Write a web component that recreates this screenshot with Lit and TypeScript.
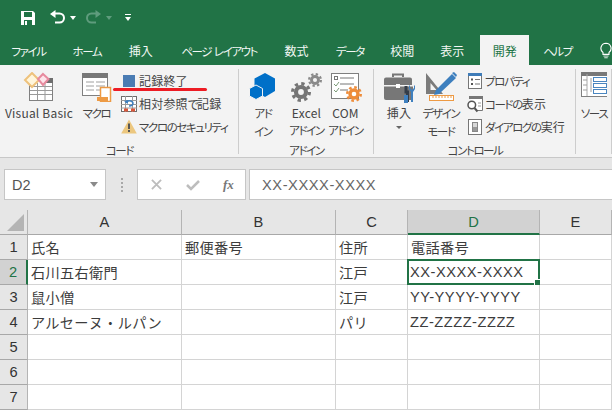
import { LitElement, html, css, svg } from "lit";
import { customElement } from "lit/decorators.js";

const gear = (cx: number, cy: number, r: number, color: string) => {
  const teeth = 8;
  const tr = r * 0.84;
  const c = 2 * Math.PI * tr;
  return svg`<circle cx=${cx} cy=${cy} r=${tr} fill="none" stroke=${color} stroke-width=${r * 0.32} stroke-dasharray="${c / teeth / 2} ${c / teeth / 2}" />
  <circle cx=${cx} cy=${cy} r=${r * 0.5} fill="none" stroke=${color} stroke-width=${r * 0.42} />`;
};

const kana = (s: string) =>
  s.split(/([\u3040-\u30ff]+)/).map((p, i) => (i % 2 ? html`<span class="ka">${p}</span>` : p));

const icons = {
  vb: html`<svg width="32" height="30" viewBox="0 0 32 30">
    <rect x="6.500" y="6.500" width="23" height="22" fill="#fff" stroke="#808080"/>
    <rect x="23" y="6" width="7" height="5" fill="#6e6e6e"/>
    <path d="M7 14.500h22M7 18.500h22M7 22.500h22M14.500 11v17M22 11v17" stroke="#9a9a9a"/>
    <path d="M9 1 16 8 9 15 2 8Z" fill="#fff6dc" stroke="#eec27c" stroke-width="2"/>
    <path d="M20 2 25.500 7 20 13 15 7Z" fill="#fde4ea" stroke="#e78a9e" stroke-width="2"/>
  </svg>`,
  macro: html`<svg width="32" height="30" viewBox="0 0 32 30">
    <rect x="1.500" y="1.500" width="25" height="22" fill="#fff" stroke="#808080"/>
    <rect x="1" y="1" width="26" height="5" fill="#787878"/>
    <path d="M5 10h8M15 10h9M5 14h8M15 14h9M5 18h8M15 18h9" stroke="#a0a0a0"/>
    <path d="M19.500 15.500h10v14h-10Z" fill="#fff" stroke="#ed9a44" stroke-width="1.500"/>
    <rect x="16" y="25" width="11" height="4" fill="#ed9a44"/>
  </svg>`,
  stop: html`<svg width="14" height="14" viewBox="0 0 14 14"><rect x="1" y="1" width="12" height="12" fill="#4a7cb3"/></svg>`,
  rel: html`<svg width="18" height="18" viewBox="0 0 18 18">
    <rect x="1.500" y="1.500" width="15" height="15" fill="#fff" stroke="#6e6e6e"/>
    <path d="M1 5.500h16M1 9.500h16M1 13h16M5.500 1v16M12.500 1v16" stroke="#9a9a9a"/>
    <rect x="4" y="13.500" width="4" height="3" fill="#d9573a"/><rect x="11" y="13.500" width="4" height="3" fill="#d9573a"/>
    <path d="M6 8c1-3 6-3 7 0 0 2-2 3-4 3" fill="none" stroke="#3f80bf" stroke-width="1.500"/>
    <path d="M4 6l4-1v4z" fill="#3f80bf"/>
  </svg>`,
  warn: html`<svg width="16" height="15" viewBox="0 0 16 15">
    <path d="M8 0.500 15.800 14.500H.2Z" fill="#ecc77f"/>
    <rect x="7" y="4.500" width="2" height="5.500" fill="#555"/><rect x="7" y="11" width="2" height="2" fill="#555"/>
  </svg>`,
  addin: html`<svg width="28" height="28" viewBox="0 0 28 28">
    <path d="M16 1 26 6.500V19L16 25 5.500 19V6.500Z" fill="#0070c8"/>
    <path d="M7 13 13.500 16.500V24L7 27.500.5 24V16.500Z" fill="#0070c8" stroke="#f3f3f3"/>
  </svg>`,
  gears: html`<svg width="34" height="32" viewBox="0 0 34 32">${gear(11, 20, 10, "#757575")}${gear(25, 8, 7, "#8a8a8a")}</svg>`,
  com: html`<svg width="32" height="30" viewBox="0 0 32 30">
    <rect x="1.500" y="1.500" width="27" height="25" fill="#fff" stroke="#7f7f7f"/>
    <path d="M10 6h14M10 12h14M10 18h8" stroke="#777"/>
    <rect x="4.500" y="4.500" width="3" height="3" fill="none" stroke="#777"/>
    <path d="M4 12l2 2 3-4M4 18l2 2 3-4" fill="none" stroke="#7b9a78"/>
    ${gear(24, 22, 8, "#ee8c3a")}
  </svg>`,
  box: html`<svg width="32" height="32" viewBox="0 0 32 32">
    <path d="M10 5V2.500h10V5" fill="none" stroke="#777" stroke-width="2"/>
    <path d="M1 7.500a2 2 0 0 1 2-2h24a2 2 0 0 1 2 2V13H1Z" fill="#777"/>
    <path d="M1 14.500h29V28H3a2 2 0 0 1-2-2Z" fill="#777"/>
    <rect x="13" y="12" width="4" height="4" fill="#fff"/>
    <path d="M23 14v6h1.500v10" stroke="#333c48" stroke-width="3" fill="none"/>
    <path d="M27 13v3l2 2 2-2v-3l1 1v3l-2 3v10h-2V20l-2-3v-3Z" fill="#3f80bf"/>
    <path d="M21 23h4v8h-4Z" fill="#3f80bf"/>
  </svg>`,
  design: html`<svg width="32" height="32" viewBox="0 0 32 32">
    <path d="M1 1V22H18Z M5.500 11 11.500 18H5.500Z" fill="#7b7b7b" fill-rule="evenodd"/>
    <path d="M27 2 31 6 14 22 9 23 11 18Z" fill="#3d7fbe"/>
    <path d="M27 1 29 0 32 3 31 5Z" fill="#3d7fbe"/>
    <rect x="4.500" y="23.500" width="24" height="5" fill="#fff" stroke="#ed9a44"/>
    <path d="M8 24v2M11 24v2M14 24v2M17 24v2M20 24v2M23 24v2M26 24v2" stroke="#ed9a44"/>
  </svg>`,
  prop: html`<svg width="16" height="18" viewBox="0 0 16 18">
    <rect x="1.500" y="1.500" width="13" height="15" fill="#fff" stroke="#777"/>
    <rect x="1" y="1" width="14" height="3" fill="#3f7cb8"/>
    <rect x="4" y="6.500" width="2" height="2" fill="#555"/><rect x="4" y="11" width="2" height="2" fill="#555"/>
    <path d="M8 7.500h5M8 12h5" stroke="#777"/>
  </svg>`,
  code: html`<svg width="18" height="18" viewBox="0 0 18 18">
    <path d="M3 1.500h13.500V15.500H10" fill="#fff" stroke="#777"/>
    <rect x="3" y="1" width="14" height="3" fill="#777"/>
    <path d="M12 8h3M12 11h3" stroke="#999"/>
    <circle cx="5.800" cy="10" r="3.800" fill="#fff" stroke="#555" stroke-width="1.500"/>
    <path d="M8.500 13 11.500 16.500" stroke="#555" stroke-width="2"/>
  </svg>`,
  dialog: html`<svg width="16" height="18" viewBox="0 0 16 18">
    <rect x="1.500" y="1.500" width="13" height="15" fill="#fff" stroke="#777"/>
    <rect x="5.500" y="4.500" width="5" height="9" fill="#d8d8d8" stroke="#888"/>
    <rect x="6" y="9" width="4" height="4" fill="#9a9a9a"/>
  </svg>`,
  source: html`<svg width="26" height="26" viewBox="0 0 26 26">
    <rect x="0.500" y="0.500" width="30" height="24" fill="#fff" stroke="#808080"/>
    <rect x="0" y="0" width="30" height="4" fill="#787878"/>
    <path d="M6 2v22" stroke="#aaa"/>
    <path d="M2 8h4M2 13h4M2 18h4M10 6v14" stroke="#a0a0a0"/>
    <rect x="12.500" y="5.500" width="13" height="4" fill="#fff" stroke="#4a86c0"/>
    <rect x="12.500" y="11.500" width="13" height="4" fill="#fff" stroke="#4a86c0"/>
    <rect x="12.500" y="17.500" width="13" height="4" fill="#fff" stroke="#4a86c0"/>
  </svg>`,
};

const TABS: [string, number][] = [
  ["ファイル", 57], ["ホーム", 60], ["挿入", 48], ["ページ レイアウト", 109], ["数式", 46],
  ["データ", 61], ["校閲", 44], ["表示", 56], ["開発", 49], ["ヘルプ", 57],
];
const COLS: [string, number][] = [["A", 154], ["B", 154], ["C", 72], ["D", 132], ["E", 72]];
const ROWS: string[][] = [
  ["氏名", "郵便番号", "住所", "電話番号", ""],
  ["石川五右衛門", "", "江戸", "XX-XXXX-XXXX", ""],
  ["鼠小僧", "", "江戸", "YY-YYYY-YYYY", ""],
  ["アルセーヌ・ルパン", "", "パリ", "ZZ-ZZZZ-ZZZZ", ""],
  ["", "", "", "", ""],
  ["", "", "", "", ""],
  ["", "", "", "", ""],
];

@customElement("app-root")
export class AppRoot extends LitElement {
  static styles = css`
    :host { display: block; width: 612px; height: 410px; overflow: hidden; position: relative;
      background: #e6e6e6; color: #444;
      font-family: "Noto Sans CJK JP", "Liberation Sans", sans-serif; font-size: 12px; }
    .qat { height: 35px; background: #217346; display: flex; align-items: center; padding-left: 20px; }
    .qat svg { display: block; }
    .qat .s1 { margin-right: 13px; } .qat .s2 { margin-right: 4px; } .qat .s3 { margin-right: 9px; } .qat .s4 { margin-right: 4px; } .qat .s5 { margin-right: 13px; }
    .tabs { height: 30px; background: #217346; display: flex; color: #f2f7f4; position: relative; }
    .tab { display: flex; align-items: center; justify-content: center; white-space: pre; height: 30px; }
    .tab.on { background: #f3f3f3; color: #217346; }
    .bulb { margin-left: 14px; align-self: center; }
    .ka { font-feature-settings: "palt"; font-size: 11.5px; letter-spacing: -1.4px; }
    .ribbon { height: 92px; background: #f3f3f3; border-bottom: 1px solid #c8c8c8; box-sizing: content-box; display: flex; color: #444;
      letter-spacing: 0.2px; line-height: 17px; position: relative; }
    .group { display: flex; flex-direction: column; padding-top: 4px; position: relative; box-sizing: border-box; height: 92px; flex: none; }
    .group::after { content: ""; position: absolute; right: 0; top: 4px; bottom: 3px; width: 1px; background: #cdcdcd; }
    .g1 { width: 239px; } .g2 { width: 135px; } .g3 { width: 202px; } .g4 { width: 36px; }
    .items { display: flex; height: 73px; }
    .glabel { height: 15px; line-height: 15px; text-align: center; }
    .big { display: flex; flex-direction: column; align-items: center; padding-top: 3px; flex: none; white-space: nowrap; }
    .ic { height: 30px; display: flex; align-items: flex-start; justify-content: center; margin-bottom: 2px; }
    .caret { width: 0; height: 0; border: 3px solid transparent; border-top: 3px solid #666; margin-top: 5px; }
    .small { display: flex; flex-direction: column; flex: none; }
    .small.s1 { margin-left: 5px; }
    .small.s2 { margin-left: 6px; }
    .shift { margin-left: 2px; }
    .srow { height: 23px; display: flex; align-items: center; white-space: nowrap; }
    .sic { width: 18px; display: flex; justify-content: center; margin-right: 1px; flex: none; }
    .mk { position: absolute; left: 113px; top: 23px; width: 94px; height: 3px; border-radius: 2px; background: #ed1c24; }
    .fbar { height: 52px; box-sizing: border-box; padding-top: 11px; display: flex; align-items: flex-start; background: #e6e6e6; }
    .fb { height: 31px; box-sizing: border-box; background: #fff; border: 1px solid #c6c6c6; display: flex; align-items: center; flex: none; }
    .name { width: 102px; margin-left: 4px; padding-left: 7px; justify-content: space-between; font: 14.5px "Liberation Sans", sans-serif; color: #555; }
    .name i { width: 0; height: 0; border: 4px solid transparent; border-top: 5px solid #8a8a8a; margin: 4px 7px 0 0; }
    .dots { width: 31px; display: flex; flex-direction: column; gap: 2px; align-items: center; justify-content: center; height: 31px; flex: none; }
    .dots b { width: 2px; height: 2px; background: #a8a8a8; display: block; }
    .fx { width: 109px; margin-right: 3px; gap: 24px; padding-left: 13px; color: #b3b3b3; }
    .fxt { font: italic bold 13px "Liberation Serif", serif; color: #777; margin-left: -1px; }
    .ftext { flex: 1; border-right: none; padding-left: 12px; color: #666; font: 14.67px "Liberation Sans", sans-serif; letter-spacing: .55px; }
    .grid { display: grid; grid-template-columns: 28px 154px 154px 72px 132px 72px; grid-auto-rows: 25px; background: #fff; position: relative; }
    .hd { background: #e6e6e6; box-sizing: border-box; border-right: 1px solid #b4b4b4; border-bottom: 1px solid #a8a8a8;
      display: flex; align-items: center; justify-content: center; color: #333; font: 14.67px "Liberation Sans", sans-serif; }
    .hd.sel { background: #d2d2d2; color: #217346; }
    .hd.col.sel { border-bottom: 2px solid #217346; }
    .hd.row.sel { border-right: 2px solid #217346; }
    .corner { align-items: flex-end; justify-content: flex-end; padding: 0 3px 3px 0; }
    .corner svg { display: block; }
    .cell { box-sizing: border-box; border-right: 1px solid #d4d4d4; border-bottom: 1px solid #d4d4d4; padding: 0 0 0 3px;
      display: flex; align-items: center; white-space: nowrap; font-size: 14.2px; letter-spacing: .3px; color: #3c3c3c; position: relative; font-weight: 400; }
    .latin { font-family: "Liberation Sans", sans-serif; font-size: 14.67px; letter-spacing: .5px; margin-left: -1px; }
    .active { position: absolute; left: 407px; top: 49px; width: 133px; height: 26px; box-sizing: border-box; border: 2px solid #217346; pointer-events: none; }
    .handle { position: absolute; right: -2px; bottom: -2px; width: 5px; height: 5px; background: #217346; border-left: 1px solid #fff; border-top: 1px solid #fff; box-sizing: content-box; }
  `;

  private big(icon: unknown, lines: string[], width: number, caret = false) {
    return html`<div class="big" style="width:${width}px"><div class="ic">${icon}</div>${lines.map((l) => html`<div>${kana(l)}</div>`)}${caret ? html`<i class="caret"></i>` : ""}</div>`;
  }
  private row(icon: unknown, text: string) {
    return html`<div class="srow"><span class="sic">${icon}</span><span>${kana(text)}</span></div>`;
  }

  render() {
    return html`
      <div class="qat">
        <svg class="s1" width="16" height="16" viewBox="0 0 16 16"><path d="M1 1H13L15 3V15H1Z" fill="#fff"/><rect x="4" y="2" width="8" height="5" fill="#217346"/><rect x="4" y="10" width="8" height="5" fill="#217346"/><rect x="5" y="11" width="2" height="4" fill="#fff"/></svg>
        <svg class="s2" width="17" height="16" viewBox="0 0 17 16"><path d="M6 3.500h4.500a4.500 4.500 0 0 1 0 9H6" fill="none" stroke="#fff" stroke-width="2"/><path d="M6.500 0 1 4l5.500 4Z" fill="#fff"/></svg>
        <svg class="s3" width="6" height="4" viewBox="0 0 6 4"><path d="M0 0h6L3 4Z" fill="#fff"/></svg>
        <svg class="s4" width="17" height="16" viewBox="0 0 17 16"><path d="M11 3.500H6.500a4.500 4.500 0 0 0 0 9H11" fill="none" stroke="#5f9c7d" stroke-width="2"/><path d="M10.500 0 16 4l-5.500 4Z" fill="#5f9c7d"/></svg>
        <svg class="s5" width="6" height="4" viewBox="0 0 6 4"><path d="M0 0h6L3 4Z" fill="#5f9c7d"/></svg>
        <svg width="6" height="7" viewBox="0 0 6 7"><path d="M0 0h6v1H0Z M0 3h6L3 7Z" fill="#fff"/></svg>
      </div>
      <div class="tabs">
        ${TABS.map(([t, w]) => html`<div class="tab ${t === "開発" ? "on" : ""}" style="width:${w}px"><span>${kana(t)}</span></div>`)}
        <svg class="bulb" width="12" height="19" viewBox="0 0 14 19"><path d="M7 1a6 6 0 0 1 3.500 10.800V14h-7v-2.200A6 6 0 0 1 7 1Z" fill="none" stroke="#fff" stroke-width="1.300"/><path d="M4 16h6M5 18h4" stroke="#fff"/></svg>
      </div>
      <div class="ribbon">
        <div class="group g1">
          <div class="items">
            ${this.big(icons.vb, ["Visual Basic"], 78)}
            ${this.big(icons.macro, ["マクロ"], 37)}
            <div class="small s1">
              ${this.row(icons.stop, "記録終了")}
              ${this.row(icons.rel, "相対参照で記録")}
              ${this.row(icons.warn, "マクロのセキュリティ")}
            </div>
          </div>
          <div class="glabel">${kana("コード")}</div>
          <div class="mk"></div>
        </div>
        <div class="group g2">
          <div class="items">
            ${this.big(icons.addin, ["アド", "イン"], 48)}
            ${this.big(icons.gears, ["Excel", "アドイン"], 39)}
            ${this.big(icons.com, ["COM", "アドイン"], 39)}
          </div>
          <div class="glabel">${kana("アドイン")}</div>
        </div>
        <div class="group g3">
          <div class="items shift">
            ${this.big(icons.box, ["挿入"], 46, true)}
            ${this.big(icons.design, ["デザイン", "モード"], 38)}
            <div class="small s2">
              ${this.row(icons.prop, "プロパティ")}
              ${this.row(icons.code, "コードの表示")}
              ${this.row(icons.dialog, "ダイアログの実行")}
            </div>
          </div>
          <div class="glabel">${kana("コントロール")}</div>
        </div>
        <div class="group g4">
          <div class="items">${this.big(icons.source, ["ソース"], 36)}</div>
        </div>
      </div>
      <div class="fbar">
        <div class="fb name"><span>D2</span><i></i></div>
        <div class="dots"><b></b><b></b><b></b><b></b></div>
        <div class="fb fx">
          <svg width="11" height="11" viewBox="0 0 12 12"><path d="M1 1 11 11M11 1 1 11" stroke="#bdbdbd" stroke-width="2"/></svg>
          <svg width="14" height="12" viewBox="0 0 14 12"><path d="M1 6l4 4 8-8" fill="none" stroke="#bdbdbd" stroke-width="2.500"/></svg>
          <span class="fxt">fx</span>
        </div>
        <div class="fb ftext">XX-XXXX-XXXX</div>
      </div>
      <div class="grid">
        <div class="hd corner"><svg width="17" height="17" viewBox="0 0 17 17"><path d="M17 0V17H0Z" fill="#b4b4b4"/></svg></div>
        ${COLS.map(([c]) => html`<div class="hd col ${c === "D" ? "sel" : ""}">${c}</div>`)}
        ${ROWS.map((r, i) => html`
          <div class="hd row ${i === 1 ? "sel" : ""}">${i + 1}</div>
          ${r.map((v) => html`<div class="cell"><span class="${/^[XYZ]/.test(v) ? "latin" : ""}">${v}</span></div>`)}
        `)}
        <div class="active"><div class="handle"></div></div>
      </div>
    `;
  }
}
